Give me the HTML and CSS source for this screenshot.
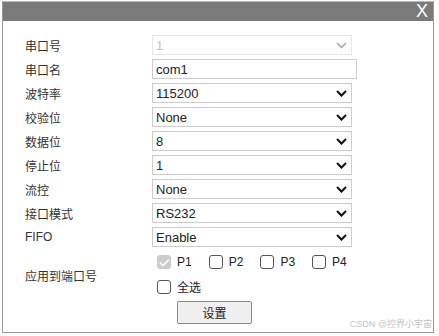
FILE: index.html
```html
<!DOCTYPE html>
<html lang="zh">
<head>
    <meta charset="UTF-8">
    <title>串口设置</title>
    <link rel="stylesheet" href="styles.css">
</head>
<body>

    <div class="dialog">
        <div class="titlebar">
            <span class="close">X</span>
        </div>

        <div class="form">
            <div class="row">
                <label>串口号</label>
                <div class="sel disabled">
                    <select disabled><option>1</option></select>
                    <svg class="chev" width="11" height="7" viewBox="0 0 11 7"><path d="M1 1l4.5 4.5 4.5-4.5" fill="none" stroke="#aaa" stroke-width="1.6"/></svg>
                </div>
            </div>
            <div class="row">
                <label>串口名</label>
                <input class="txt" type="text" value="com1">
            </div>
            <div class="row">
                <label>波特率</label>
                <div class="sel">
                    <select><option>115200</option></select>
                    <svg class="chev" width="11" height="7" viewBox="0 0 11 7"><path d="M1 1l4.5 4.5 4.5-4.5" fill="none" stroke="#111" stroke-width="2"/></svg>
                </div>
            </div>
            <div class="row">
                <label>校验位</label>
                <div class="sel">
                    <select><option>None</option></select>
                    <svg class="chev" width="11" height="7" viewBox="0 0 11 7"><path d="M1 1l4.5 4.5 4.5-4.5" fill="none" stroke="#111" stroke-width="2"/></svg>
                </div>
            </div>
            <div class="row">
                <label>数据位</label>
                <div class="sel">
                    <select><option>8</option></select>
                    <svg class="chev" width="11" height="7" viewBox="0 0 11 7"><path d="M1 1l4.5 4.5 4.5-4.5" fill="none" stroke="#111" stroke-width="2"/></svg>
                </div>
            </div>
            <div class="row">
                <label>停止位</label>
                <div class="sel">
                    <select><option>1</option></select>
                    <svg class="chev" width="11" height="7" viewBox="0 0 11 7"><path d="M1 1l4.5 4.5 4.5-4.5" fill="none" stroke="#111" stroke-width="2"/></svg>
                </div>
            </div>
            <div class="row">
                <label>流控</label>
                <div class="sel">
                    <select><option>None</option></select>
                    <svg class="chev" width="11" height="7" viewBox="0 0 11 7"><path d="M1 1l4.5 4.5 4.5-4.5" fill="none" stroke="#111" stroke-width="2"/></svg>
                </div>
            </div>
            <div class="row">
                <label>接口模式</label>
                <div class="sel">
                    <select><option>RS232</option></select>
                    <svg class="chev" width="11" height="7" viewBox="0 0 11 7"><path d="M1 1l4.5 4.5 4.5-4.5" fill="none" stroke="#111" stroke-width="2"/></svg>
                </div>
            </div>
            <div class="row">
                <label>FIFO</label>
                <div class="sel">
                    <select><option>Enable</option></select>
                    <svg class="chev" width="11" height="7" viewBox="0 0 11 7"><path d="M1 1l4.5 4.5 4.5-4.5" fill="none" stroke="#111" stroke-width="2"/></svg>
                </div>
            </div>

            <div class="ports">
                <label>应用到端口号</label>
                <div class="checks">
                    <div class="check-line">
                        <span class="cb"><span class="box checked"><svg width="11" height="9" viewBox="0 0 11 9"><path d="M1 4.5l3 3 6-6" fill="none" stroke="#fff" stroke-width="1.6"/></svg></span>P1</span>
                        <span class="cb"><span class="box"></span>P2</span>
                        <span class="cb"><span class="box"></span>P3</span>
                        <span class="cb"><span class="box"></span>P4</span>
                    </div>
                    <div class="check-line">
                        <span class="cb"><span class="box"></span>全选</span>
                    </div>
                </div>
            </div>

            <div class="actions">
                <button>设置</button>
            </div>
        </div>

        <div class="mark">CSDN @控界小宇宙</div>
    </div>

</body>
</html>
```

FILE: styles.css
```css
body {
    margin: 0;
    background: #fff;
    font-family: "Liberation Sans", "Noto Sans CJK SC", sans-serif;
    color: #222;
}
.dialog {
    position: relative;
    margin: 1px 0 0 2px;
    width: 430px;
    height: 330px;
    border: 1px solid #999;
    border-top-color: #bbb;
}
.titlebar {
    height: 19px;
    background-color: #7a7a7a;
    display: flex;
    justify-content: flex-end;
    align-items: center;
}
.close {
    color: #fff;
    font-size: 18px;
    margin-right: 5px;
    line-height: 19px;
}
.form {
    padding: 14px 0 0 22px;
}
.row {
    display: flex;
    align-items: center;
    height: 20px;
    margin-bottom: 4px;
}
.row label, .ports label {
    width: 127px;
    font-size: 12px;
    color: #333;
}
.sel {
    position: relative;
    width: 200px;
    height: 20px;
}
.sel select {
    appearance: none;
    -webkit-appearance: none;
    width: 100%;
    height: 100%;
    margin: 0;
    padding: 0 0 0 3px;
    border: 1px solid #ccc;
    border-radius: 0;
    background: #fff;
    font-family: "Liberation Sans", sans-serif;
    font-size: 13px;
    color: #222;
}
.sel.disabled select {
    color: #aaa;
    border-color: #ddd;
}
.chev {
    position: absolute;
    right: 5px;
    top: 7px;
}
.txt {
    box-sizing: border-box;
    width: 205px;
    height: 20px;
    margin: 0;
    padding: 0 3px;
    border: 1px solid #ccc;
    font-family: "Liberation Sans", sans-serif;
    font-size: 13px;
    color: #222;
}
.ports {
    display: flex;
    align-items: center;
    margin-top: 8px;
}
.checks {
    display: flex;
    flex-direction: column;
    gap: 9px;
    padding-left: 5px;
}
.check-line {
    display: flex;
    gap: 17px;
}
.cb {
    display: flex;
    align-items: center;
    gap: 6px;
    font-size: 12px;
    color: #222;
}
.box {
    box-sizing: border-box;
    width: 14px;
    height: 14px;
    border: 1px solid #555;
    border-radius: 3px;
    display: flex;
    align-items: center;
    justify-content: center;
}
.box.checked {
    background: #ccc;
    border-color: #ccc;
}
.actions {
    padding: 6px 0 0 152px;
}
.actions button {
    width: 75px;
    height: 23px;
    border: 1px solid #888;
    border-radius: 2px;
    background: #f0f0f0;
    font-family: "Noto Sans CJK SC", sans-serif;
    font-size: 12px;
    color: #222;
}
.mark {
    position: absolute;
    right: 1px;
    bottom: 2px;
    font-size: 9px;
    color: #c4c4c4;
}
```
